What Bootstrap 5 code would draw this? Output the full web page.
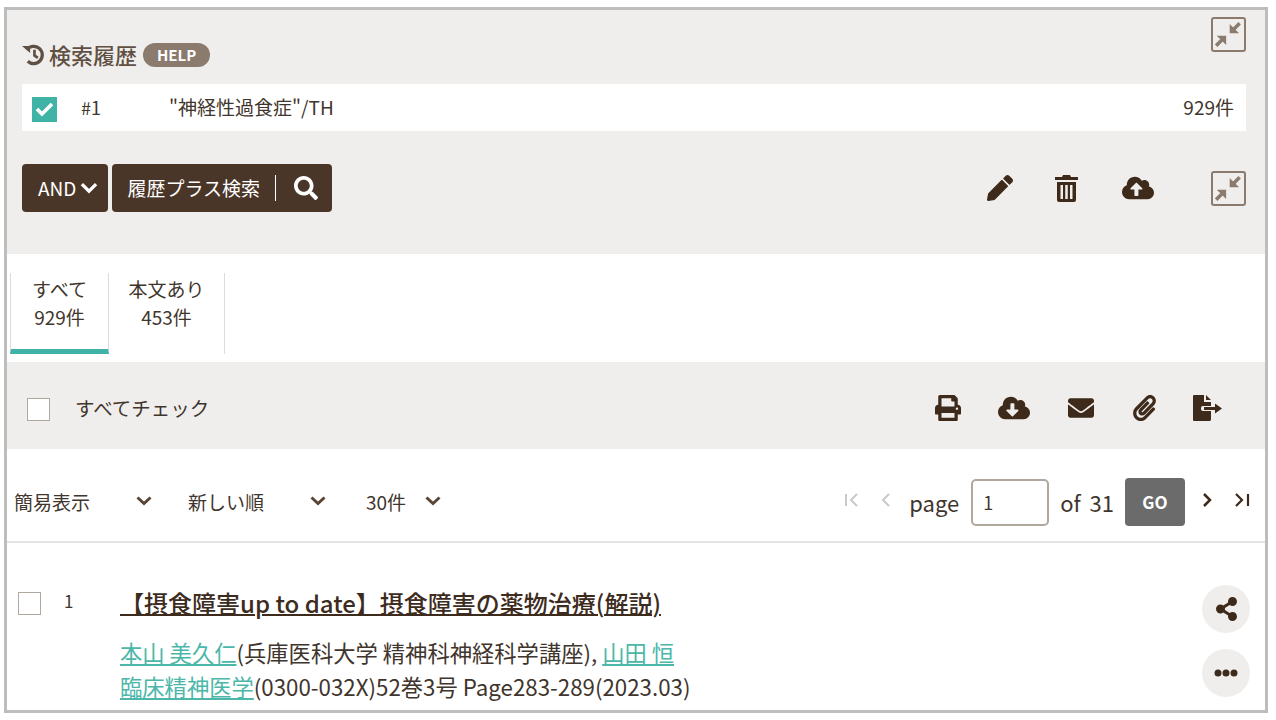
<!DOCTYPE html>
<html lang="ja">

<head>
    <meta charset="UTF-8">
    <title>検索履歴</title>
    <link href="https://cdn.jsdelivr.net/npm/bootstrap@5.3.0/dist/css/bootstrap.min.css" rel="stylesheet">
    <style>
        :root {
            --dark: #4a3628;
            --ink: #3f352d;
            --teal: #3fb4a6;
            --panel: #f0eeec;
        }

        body {
            background: #fff;
            font-family: "Noto Sans CJK JP", "Noto Sans", sans-serif;
            color: var(--ink);
            font-size: 19px;
            height: 720px;
            overflow: hidden;
        }

        .frame {
            margin: 7px 0 0 4px;
            width: 1264px;
            height: 706px;
            border: 3px solid #bdbdbd;
            overflow: hidden;
        }

        .top-panel {
            height: 244px;
            background: var(--panel);
            padding: 7px 19px 0 15px;
        }

        .title-row {
            height: 67px;
        }

        .hist-title {
            font-size: 22px;
            font-weight: 500;
            color: #5f5043;
            line-height: 28px;
            margin-top: 23px;
        }

        .help-tag {
            background: #8a7b6e;
            color: #fff;
            font-size: 15px;
            font-weight: 700;
            border-radius: 12px;
            padding: 0 14px;
            line-height: 24px;
            height: 24px;
            margin: 2px 0 0 2px;
        }

        .shrink-btn {
            width: 35px;
            height: 35px;
            border: 2.500px solid #8a7b6e;
            border-radius: 3px;
            background: transparent;
            padding: 0;
        }

        .hist-row {
            height: 47px;
            background: #fff;
            padding: 0 12px 0 10px;
        }

        .tick-on {
            width: 25px;
            height: 25px;
            background: var(--teal);
            margin-top: 4px;
        }

        .hist-no {
            width: 88px;
            margin-left: 24px;
            font-size: 18px;
        }

        .action-row {
            margin-top: 33px;
            height: 48px;
        }

        .dark-btn {
            background: var(--dark);
            color: #fff;
            border: 0;
            border-radius: 4px;
            height: 48px;
            font-size: 19px;
            padding: 0 10px 0 16px;
        }

        .dark-btn:hover {
            background: var(--dark);
            color: #fff;
        }

        .search-btn {
            padding: 0 14px 0 15px;
        }

        .btn-sep {
            width: 1px;
            height: 26px;
            background: #fff;
            margin: 0 18px 0 15px;
        }

        .act-pen {
            margin-right: 42px;
        }

        .act-trash {
            margin-right: 44px;
        }

        .act-cloud {
            margin-right: 57px;
        }

        .tab-bar {
            height: 108px;
            padding: 19px 0 0 3px;
        }

        .res-tab {
            height: 81px;
            border-right: 1px solid #dedcd8;
            text-align: center;
            line-height: 28px;
            padding-top: 2px;
            font-size: 19px;
        }

        .tab-all {
            width: 99px;
            border-left: 1px solid #dedcd8;
            border-bottom: 5px solid var(--teal);
        }

        .tab-full {
            width: 116px;
        }

        .check-bar {
            height: 87px;
            background: var(--panel);
            padding: 4px 26px 0 20px;
        }

        .check-bar .tick-off {
            margin-top: 4px;
        }

        .check-label {
            margin-left: 25px;
            font-size: 19.500px;
        }

        .tick-off {
            width: 23px;
            height: 23px;
            background: #fff;
            border: 1.500px solid #b0a79f;
            flex: none;
        }

        .icon-cell {
            text-align: center;
            line-height: 0;
        }

        .cell-print {
            width: 63px;
        }

        .cell-down {
            width: 70px;
        }

        .cell-mail {
            width: 64px;
        }

        .cell-clip {
            width: 62px;
        }

        .cell-export {
            width: 64px;
        }

        .sort-row {
            height: 94px;
            border-bottom: 2px solid #e4e4e4;
            padding: 14px 0 0 7px;
            font-size: 19px;
        }

        .sort-a {
            width: 174px;
            padding-right: 36px;
        }

        .sort-b {
            width: 178px;
            padding-right: 40px;
        }

        .sort-c {
            width: 75px;
        }

        .sort-mark {
            margin-bottom: 2px;
        }

        .page-input {
            width: 78px;
            height: 47px;
            border: 2px solid #b0a79f;
            border-radius: 5px;
            padding: 0 10px;
            margin: 0 11px 0 12px;
            font-size: 18px;
            color: var(--ink);
            font-family: inherit;
        }

        .go-btn {
            width: 60px;
            height: 48px;
            background: #6b6b6b;
            color: #fff;
            border: 0;
            border-radius: 4px;
            font-weight: 700;
            font-size: 17px;
            padding: 0;
            margin-left: 11px;
        }

        .page-text {
            font-size: 22px;
            word-spacing: 4px;
        }

        .pg-first {
            margin-right: 21px;
        }

        .pg-prev {
            margin-right: 18px;
        }

        .pg-next {
            margin-left: 17px;
        }

        .pg-last {
            margin: 0 15px 0 22px;
        }

        .result-row {
            padding: 42px 15px 0 11px;
        }

        .result-row .tick-off {
            margin-top: 7px;
        }

        .res-no {
            width: 79px;
            padding-left: 23px;
            font-size: 17px;
            line-height: 22px;
            margin-top: 5px;
        }

        .res-title {
            font-size: 24px;
            font-weight: 500;
            color: #3d2c1e;
            line-height: 40px;
            text-decoration: underline;
            text-decoration-thickness: 2px;
            margin-top: -2px;
            display: block;
        }

        .res-meta {
            font-size: 22.300px;
            line-height: 34px;
            margin-top: 12px;
            white-space: nowrap;
        }

        .res-meta a {
            color: #4cb7a9;
        }

        .round-btn {
            width: 48px;
            height: 48px;
            border-radius: 50%;
            background: var(--panel);
            margin-bottom: 16px;
        }
    </style>
</head>

<body>
    <div class="frame">
        <!-- history -->
        <div class="top-panel">
            <div class="title-row d-flex justify-content-between align-items-start">
                <div class="hist-title d-flex align-items-center gap-1">
                    <svg width="23" height="23" viewBox="0 0 24 24" fill="none" stroke="#5f5043" stroke-width="3.400">
                        <path d="M5 7A9 9 0 1 1 6 19" />
                        <path d="M0 3h8.500v7.500z" fill="#5f5043" stroke="none" />
                        <path d="M13 7v6l3.500 2.500" stroke-width="2.800" />
                    </svg>
                    <span>検索履歴</span>
                    <span class="help-tag">HELP</span>
                </div>
                <button class="shrink-btn d-flex align-items-center justify-content-center">
                    <svg width="27" height="27" viewBox="0 0 23 23" fill="#8a7b6e" stroke="#8a7b6e">
                        <path d="M12.500 2.500v8h8z" stroke="none" />
                        <path d="M16 7l5-5" stroke-width="3" />
                        <path d="M9.500 20.500v-8h-8z" stroke="none" />
                        <path d="M6 16l-5 5" stroke-width="3" />
                    </svg>
                </button>
            </div>
            <div class="hist-row d-flex align-items-center">
                <span class="tick-on d-flex align-items-center justify-content-center">
                    <svg width="19" height="15" viewBox="0 0 19 15" fill="none" stroke="#fff" stroke-width="3.600">
                        <path d="M2 7l5 5 10-10" />
                    </svg>
                </span>
                <span class="hist-no">#1</span>
                <span class="flex-grow-1">"神経性過食症"/TH</span>
                <span>929件</span>
            </div>
            <div class="action-row d-flex align-items-center">
                <button class="btn dark-btn d-flex align-items-center gap-1">AND
                    <svg width="18" height="12" viewBox="0 0 16 11" fill="none" stroke="#fff" stroke-width="3">
                        <path d="M1.500 2l6.500 6.500L14.500 2" />
                    </svg>
                </button>
                <button class="btn dark-btn search-btn d-flex align-items-center ms-1">履歴プラス検索
                    <span class="btn-sep"></span>
                    <svg width="24" height="24" viewBox="0 0 512 512" fill="#fff">
                        <path d="M505 442.700L405.300 343c-4.500-4.500-10.600-7-17-7H372c27.600-35.300 44-79.700 44-128C416 93.100 322.900 0 208 0S0 93.100 0 208s93.100 208 208 208c48.300 0 92.700-16.400 128-44v16.300c0 6.400 2.500 12.500 7 17l99.700 99.700c9.400 9.400 24.600 9.400 33.900 0l28.300-28.300c9.400-9.400 9.400-24.600.1-34zM208 336c-70.700 0-128-57.200-128-128 0-70.700 57.200-128 128-128 70.700 0 128 57.200 128 128 0 70.700-57.200 128-128 128z" />
                    </svg>
                </button>
                <div class="ms-auto d-flex align-items-center">
                    <svg class="act-pen" width="26" height="26" viewBox="0 0 512 512" fill="#3d2a1a">
                        <path d="M497.900 142.100l-46.100 46.100c-4.700 4.700-12.300 4.700-17 0l-111-111c-4.700-4.700-4.700-12.300 0-17l46.100-46.100c18.700-18.700 49.100-18.700 67.900 0l60.100 60.100c18.800 18.700 18.800 49.100 0 67.900zM284.200 99.800L21.600 362.400.4 483.900c-2.900 16.400 11.400 30.600 27.800 27.800l121.500-21.300 262.600-262.600c4.700-4.700 4.700-12.300 0-17l-111-111c-4.800-4.700-12.400-4.700-17.100 0z" />
                    </svg>
                    <svg class="act-trash" width="23" height="27" viewBox="0 0 23 27" fill="#3d2a1a">
                        <path fill-rule="evenodd" d="M8 0h7l1 2h7v3H0V2h7zM2 7h19v18a2 2 0 0 1-2 2H4a2 2 0 0 1-2-2zM5.500 10v14h2.500V10zM10.250 10v14h2.500V10zM15 10v14h2.500V10z" />
                    </svg>
                    <svg class="act-cloud" width="32" height="26" viewBox="0 0 640 512" fill="#3d2a1a">
                        <path d="M537.600 226.600c4.100-10.700 6.400-22.400 6.400-34.600 0-53-43-96-96-96-19.700 0-38.100 6-53.300 16.200C367 64.200 315.300 32 256 32c-88.400 0-160 71.600-160 160 0 2.700.1 5.400.2 8.100C40.200 219.800 0 273.200 0 336c0 79.500 64.500 144 144 144h368c70.700 0 128-57.300 128-128 0-61.900-44-113.600-102.400-125.400zM393.400 288H328v112c0 8.800-7.200 16-16 16h-48c-8.800 0-16-7.200-16-16V288h-65.400c-14.300 0-21.400-17.200-11.300-27.300l105.400-105.400c6.200-6.200 16.400-6.200 22.600 0l105.400 105.400c10.100 10.100 3 27.300-11.300 27.300z" />
                    </svg>
                    <button class="shrink-btn d-flex align-items-center justify-content-center">
                        <svg width="27" height="27" viewBox="0 0 23 23" fill="#8a7b6e" stroke="#8a7b6e">
                            <path d="M12.500 2.500v8h8z" stroke="none" />
                            <path d="M16 7l5-5" stroke-width="3" />
                            <path d="M9.500 20.500v-8h-8z" stroke="none" />
                            <path d="M6 16l-5 5" stroke-width="3" />
                        </svg>
                    </button>
                </div>
            </div>
        </div>

        <!-- tabs -->
        <div class="tab-bar d-flex">
            <div class="res-tab tab-all">すべて<br>929件</div>
            <div class="res-tab tab-full">本文あり<br>453件</div>
        </div>

        <!-- check all -->
        <div class="check-bar d-flex align-items-center">
            <span class="tick-off"></span>
            <span class="check-label flex-grow-1">すべてチェック</span>
            <span class="icon-cell cell-print">
                <svg width="26" height="26" viewBox="0 0 512 512" fill="#3d2a1a">
                    <path d="M448 192V77.250c0-8.490-3.370-16.620-9.370-22.630L393.370 9.370c-6-6-14.140-9.370-22.630-9.370H96C78.330 0 64 14.330 64 32v160c-35.350 0-64 28.650-64 64v112c0 8.840 7.160 16 16 16h48v96c0 17.670 14.330 32 32 32h320c17.670 0 32-14.330 32-32v-96h48c8.840 0 16-7.160 16-16V256c0-35.350-28.650-64-64-64zm-64 256H128v-96h256v96zm0-224H128V64h192v48c0 8.840 7.160 16 16 16h48v96zm48 72c-13.250 0-24-10.750-24-24 0-13.260 10.750-24 24-24s24 10.740 24 24c0 13.250-10.750 24-24 24z" />
                </svg>
            </span>
            <span class="icon-cell cell-down">
                <svg width="32" height="26" viewBox="0 0 640 512" fill="#3d2a1a">
                    <path d="M537.600 226.600c4.100-10.700 6.400-22.400 6.400-34.600 0-53-43-96-96-96-19.700 0-38.100 6-53.300 16.200C367 64.200 315.300 32 256 32c-88.400 0-160 71.600-160 160 0 2.700.1 5.400.2 8.100C40.200 219.800 0 273.200 0 336c0 79.500 64.500 144 144 144h368c70.700 0 128-57.300 128-128 0-61.900-44-113.600-102.400-125.400zm-132.900 88.700L299.300 420.700c-6.200 6.200-16.400 6.200-22.600 0L171.300 315.300c-10.100-10.100-2.900-27.300 11.300-27.300H248V176c0-8.800 7.200-16 16-16h48c8.800 0 16 7.200 16 16v112h65.400c14.200 0 21.400 17.200 11.300 27.300z" />
                </svg>
            </span>
            <span class="icon-cell cell-mail">
                <svg width="26" height="26" viewBox="0 0 512 512" fill="#3d2a1a">
                    <path d="M502.300 190.800c3.900-3.100 9.700-.2 9.700 4.700V400c0 26.500-21.500 48-48 48H48c-26.500 0-48-21.500-48-48V195.600c0-5 5.700-7.800 9.700-4.700 22.400 17.400 52.100 39.500 154.100 113.600 21.100 15.400 56.700 47.800 92.200 47.600 35.700.3 72-32.800 92.300-47.600 102-74.100 131.600-96.300 154-113.700zM256 320c23.200.4 56.600-29.200 73.400-41.400 132.700-96.300 142.800-104.700 173.400-128.700 5.800-4.500 9.200-11.500 9.200-18.900v-19c0-26.500-21.500-48-48-48H48C21.500 64 0 85.500 0 112v19c0 7.400 3.400 14.300 9.200 18.900 30.600 23.900 40.700 32.400 173.400 128.700 16.800 12.200 50.200 41.800 73.400 41.400z" />
                </svg>
            </span>
            <span class="icon-cell cell-clip">
                <svg width="23" height="26" viewBox="0 0 448 512" fill="#3d2a1a">
                    <path d="M43.246 466.142c-58.430-60.289-57.341-157.511 1.386-217.581L254.392 34c44.316-45.332 116.351-45.336 160.671 0 43.890 44.894 43.943 117.329 0 162.276L232.214 383.128c-29.855 30.537-78.633 30.111-107.982-.998-28.275-29.970-27.368-77.473 1.452-106.953l143.743-146.835c6.182-6.314 16.312-6.422 22.626-.241l22.861 22.379c6.315 6.182 6.422 16.312.241 22.626L171.427 319.927c-4.932 5.045-5.236 13.428-.648 18.292 4.372 4.634 11.245 4.711 15.688.165l182.849-186.851c19.613-20.062 19.613-52.725-.011-72.798-19.189-19.627-49.957-19.637-69.154 0L90.390 293.295c-34.763 35.560-35.299 93.120-1.191 128.313 34.010 35.093 88.985 35.137 123.058.286l172.060-175.999c6.177-6.319 16.307-6.433 22.626-.256l22.877 22.364c6.319 6.177 6.434 16.307.256 22.626l-172.060 175.998c-59.576 60.938-155.943 60.216-214.770-.485z" />
                </svg>
            </span>
            <span class="icon-cell cell-export">
                <svg width="29" height="26" viewBox="0 0 29 26" fill="#3d2a1a">
                    <path d="M0 1a1 1 0 0 1 1-1h10v7h7v4h-8a2 2 0 0 0-2 2v1a2 2 0 0 0 2 2h8v8a2 2 0 0 1-1 2H1a1 1 0 0 1-1-1zM13 0l5 5h-5zM11 12h11V8.500l7 5-7 5V15H11z" />
                </svg>
            </span>
        </div>

        <!-- sort and pager -->
        <div class="sort-row d-flex align-items-center">
            <div class="sort-a d-flex align-items-center justify-content-between">
                <span>簡易表示</span>
                <svg class="sort-mark" width="16" height="10" viewBox="0 0 16 10" fill="none" stroke="#5a4636" stroke-width="3">
                    <path d="M1.500 1.500L8 7.500l6.500-6"></path>
                </svg>
            </div>
            <div class="sort-b d-flex align-items-center justify-content-between">
                <span>新しい順</span>
                <svg class="sort-mark" width="16" height="10" viewBox="0 0 16 10" fill="none" stroke="#5a4636" stroke-width="3">
                    <path d="M1.500 1.500L8 7.500l6.500-6"></path>
                </svg>
            </div>
            <div class="sort-c d-flex align-items-center justify-content-between">
                <span>30件</span>
                <svg class="sort-mark" width="16" height="10" viewBox="0 0 16 10" fill="none" stroke="#5a4636" stroke-width="3">
                    <path d="M1.500 1.500L8 7.500l6.500-6"></path>
                </svg>
            </div>
            <div class="ms-auto d-flex align-items-center page-text">
                <svg class="pg-first mb-1" width="16" height="14" viewBox="0 0 16 14" fill="none" stroke="#c9c9c9" stroke-width="2">
                    <path d="M2 1v12M13 1L7 7l6 6"></path>
                </svg>
                <svg class="pg-prev mb-1" width="10" height="14" viewBox="0 0 10 14" fill="none" stroke="#c9c9c9" stroke-width="2">
                    <path d="M8 1L2 7l6 6"></path>
                </svg>
                <span>page</span>
                <input class="page-input" value="1">
                <span>of 31</span>
                <button class="go-btn">GO</button>
                <svg class="pg-next mb-1" width="10" height="14" viewBox="0 0 10 14" fill="none" stroke="#3d2a1a" stroke-width="2.500">
                    <path d="M2 1l6 6-6 6"></path>
                </svg>
                <svg class="pg-last mb-1" width="16" height="14" viewBox="0 0 16 14" fill="none" stroke="#3d2a1a" stroke-width="2.200">
                    <path d="M2 1l6 6-6 6M14 1v12"></path>
                </svg>
            </div>
        </div>

        <!-- result -->
        <div class="result-row d-flex align-items-start">
            <span class="tick-off"></span>
            <span class="res-no">1</span>
            <div class="flex-grow-1">
                <a class="res-title" href="#">【摂食障害up to date】摂食障害の薬物治療(解説)</a>
                <div class="res-meta"><a href="#">本山 美久仁</a>(兵庫医科大学 精神科神経科学講座), <a href="#">山田 恒</a><br>
                    <a href="#">臨床精神医学</a>(0300-032X)52巻3号 Page283-289(2023.03)</div>
            </div>
            <div>
                <div class="round-btn d-flex align-items-center justify-content-center">
                    <svg width="21" height="24" viewBox="0 0 448 512" fill="#3d2a1a">
                        <path d="M352 320c-22.608 0-43.387 7.819-59.790 20.895l-102.486-64.054a96.551 96.551 0 0 0 0-41.683l102.486-64.054C308.613 184.181 329.392 192 352 192c53.019 0 96-42.981 96-96S405.019 0 352 0s-96 42.981-96 96c0 7.158.79 14.130 2.276 20.841L155.790 180.895C139.387 167.819 118.608 160 96 160c-53.019 0-96 42.981-96 96s42.981 96 96 96c22.608 0 43.387-7.819 59.790-20.895l102.486 64.054A96.301 96.301 0 0 0 256 416c0 53.019 42.981 96 96 96s96-42.981 96-96-42.981-96-96-96z" />
                    </svg>
                </div>
                <div class="round-btn d-flex align-items-center justify-content-center">
                    <svg width="24" height="8" viewBox="0 0 24 8" fill="#3d2a1a">
                        <circle cx="4" cy="4" r="3.500" />
                        <circle cx="12" cy="4" r="3.500" />
                        <circle cx="20" cy="4" r="3.500" />
                    </svg>
                </div>
            </div>
        </div>
    </div>

    <script src="https://cdn.jsdelivr.net/npm/bootstrap@5.3.0/dist/js/bootstrap.bundle.min.js"></script>
</body>

</html>
